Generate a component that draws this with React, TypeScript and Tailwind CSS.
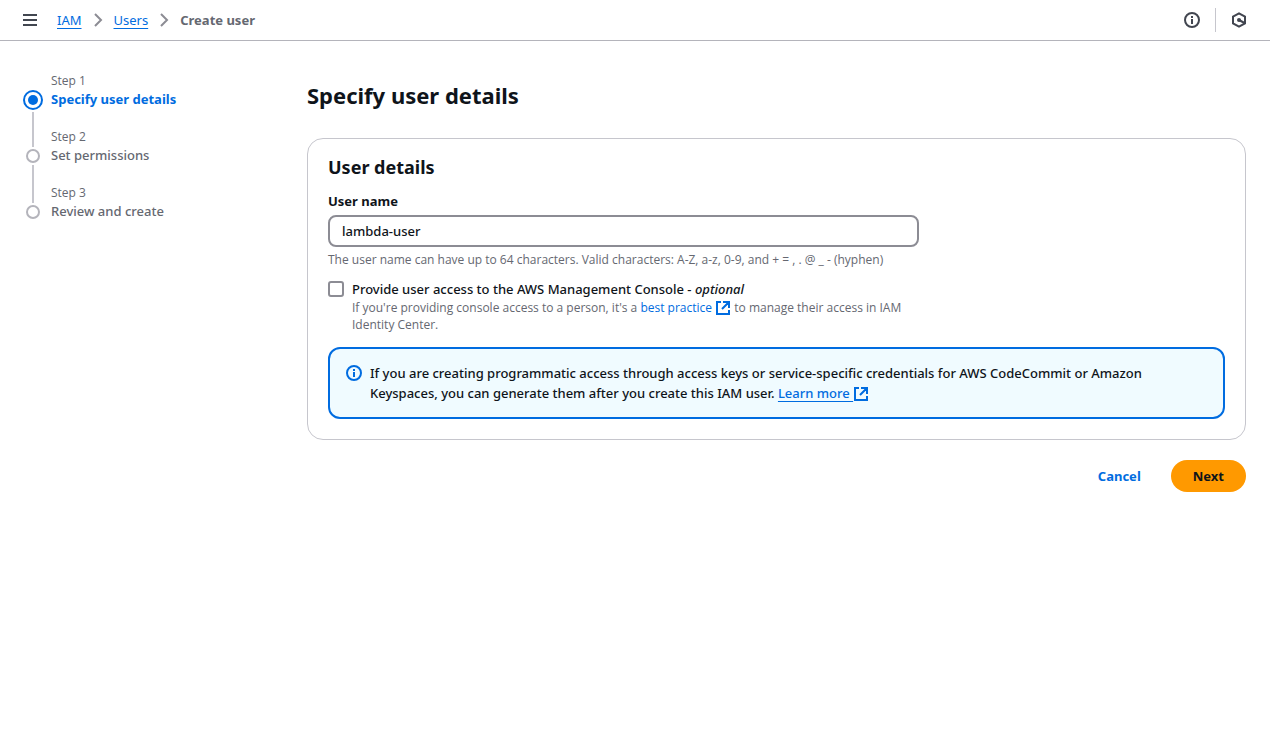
import { useState } from "react";

function InfoIcon() {
  return (
    <svg width="16" height="16" viewBox="0 0 16 16" fill="none" stroke="currentColor" strokeWidth="2" aria-hidden="true">
      <circle cx="8" cy="8" r="7" />
      <path d="M8 12V7M8 6V4" />
    </svg>
  );
}

function ExternalIcon() {
  return (
    <svg className="-my-1 inline-block align-baseline" width="16" height="16" viewBox="0 0 16 16" fill="none" stroke="currentColor" strokeWidth="2" aria-hidden="true">
      <path d="M6 2H2v12h12v-4M8 2h6v6M14 2 7 9" />
    </svg>
  );
}

function Chevron() {
  return (
    <svg className="text-[#8c8c94]" width="16" height="16" viewBox="0 0 16 16" fill="none" stroke="currentColor" strokeWidth="2" aria-hidden="true">
      <path d="m5 2 6 6-6 6" />
    </svg>
  );
}

const steps = ["Specify user details", "Set permissions", "Review and create"];

function StepList() {
  return (
    <ol>
      {steps.map((title, i) => (
        <li key={title} className="flex h-14 gap-2">
          <div className="flex w-5 shrink-0 flex-col items-center">
            {i === 0 ? (
              <span className="mt-5 mb-0.5 flex size-5 shrink-0 items-center justify-center rounded-full border-2 border-[#006ce0]">
                <span className="size-2.5 rounded-full bg-[#006ce0]" />
              </span>
            ) : (
              <>
                <span className="h-[21px] w-0.5 shrink-0 bg-[#c6c6cd]" />
                <span className="my-0.5 size-3.5 shrink-0 rounded-full border-2 border-[#b4b4bb]" />
              </>
            )}
            {i < steps.length - 1 && <span className="w-0.5 grow bg-[#c6c6cd]" />}
          </div>
          <div className="pt-0.5">
            <div className="font-['Open_Sans',sans-serif] text-[12px] leading-[17px] font-normal text-[#656871]">Step {i + 1}</div>
            <div className={i === 0 ? "font-bold text-[#006ce0]" : "text-[#656871]"}>
              {title}
            </div>
          </div>
        </li>
      ))}
    </ol>
  );
}

export default function App() {
  const [name, setName] = useState("lambda-user");
  return (
    <div className="min-h-screen bg-white font-['Noto_Sans',sans-serif] text-[13px] leading-5 font-medium text-[#0f141a]">
      <header className="flex items-center justify-between border-b border-[#b4b4bb] py-2 pr-[23px] pl-[22px]">
        <div className="flex items-center gap-[19px]">
          <button type="button" aria-label="Open navigation" className="text-[#424650]">
            <svg width="16" height="16" viewBox="0 0 16 16" stroke="currentColor" strokeWidth="2" aria-hidden="true">
              <path d="M1 3h14M1 8h14M1 13h14" />
            </svg>
          </button>
          <nav aria-label="Breadcrumbs">
            <ol className="flex items-center gap-2">
              <li><a href="#iam" className="font-normal text-[#006ce0] underline underline-offset-3">IAM</a></li>
              <li><Chevron /></li>
              <li><a href="#users" className="font-normal text-[#006ce0] underline underline-offset-3">Users</a></li>
              <li><Chevron /></li>
              <li className="font-bold text-[#656871]">Create user</li>
            </ol>
          </nav>
        </div>
        <div className="flex items-center gap-[15px] text-[#424650]">
          <button type="button" aria-label="Info"><InfoIcon /></button>
          <span className="h-6 w-px bg-[#c6c6cd]" />
          <button type="button" aria-label="Tools">
            <svg width="16" height="16" viewBox="0 0 16 16" fill="none" stroke="currentColor" strokeWidth="2" aria-hidden="true">
              <path d="M8 1.4 14 4.7v6.6L8 14.6 2 11.3V4.7Z" />
              <path d="m8 8 5.5 3" />
              <circle cx="8" cy="8" r="2" fill="currentColor" stroke="none" />
            </svg>
          </button>
        </div>
      </header>

      <div className="flex pr-6 pl-[23px]">
        <aside className="w-[284px] shrink-0 pt-[29px]">
          <StepList />
        </aside>
        <main className="min-w-0 grow pt-10">
          <h1 className="text-[22px] leading-7 font-bold">Specify user details</h1>
          <section className="mt-[29px] rounded-2xl border border-[#c6c6cd] px-5 pt-4 pb-5">
            <h2 className="text-[18px] leading-6 font-bold">User details</h2>
            <div className="mt-3 grid grid-cols-3 gap-5">
              <div className="col-span-2">
                <label htmlFor="user-name" className="block font-bold">User name</label>
                <input
                  id="user-name"
                  value={name}
                  onChange={(e) => setName(e.target.value)}
                  className="mt-1 block h-8 w-full rounded-lg border-2 border-[#8c8c94] px-3"
                />
                <p className="mt-1 font-['Open_Sans',sans-serif] text-[12px] leading-[17px] font-normal text-[#656871]">
                  The user name can have up to 64 characters. Valid characters: A-Z, a-z, 0-9, and + = , . @ _ - (hyphen)
                </p>
                <div className="mt-[11px] flex gap-2">
                  <input id="console" type="checkbox" className="mt-0.5 size-4 shrink-0 appearance-none rounded-[3px] border-2 border-[#8c8c94] checked:border-[#006ce0] checked:bg-[#006ce0]" />
                  <div>
                    <label htmlFor="console" className="block">
                      Provide user access to the AWS Management Console - <em>optional</em>
                    </label>
                    <p className="font-['Open_Sans',sans-serif] text-[12px] leading-[17px] font-normal text-[#656871]">
                      If you're providing console access to a person, it's a{" "}
                      <a href="#best" className="text-[#006ce0]">best practice <ExternalIcon /></a> to manage their access in IAM Identity Center.
                    </p>
                  </div>
                </div>
              </div>
            </div>
            <div className="mt-3.5 flex gap-2 rounded-xl border-2 border-[#006ce0] bg-[#f0fbff] px-4 py-3.5">
              <span className="mt-0.5 shrink-0 text-[#006ce0]"><InfoIcon /></span>
              <p>
                If you are creating programmatic access through access keys or service-specific credentials for AWS CodeCommit or Amazon Keyspaces, you can generate them after you create this IAM user.{" "}
                <a href="#learn" className="text-[#006ce0]"><span className="underline underline-offset-3">Learn more </span><ExternalIcon /></a>
              </p>
            </div>
          </section>
          <div className="mt-5 flex justify-end gap-2">
            <button type="button" className="h-8 rounded-full px-[22px] font-bold text-[#006ce0]">Cancel</button>
            <button type="button" className="h-8 rounded-full bg-[#ff9900] px-[22px] font-bold">Next</button>
          </div>
        </main>
      </div>
    </div>
  );
}
